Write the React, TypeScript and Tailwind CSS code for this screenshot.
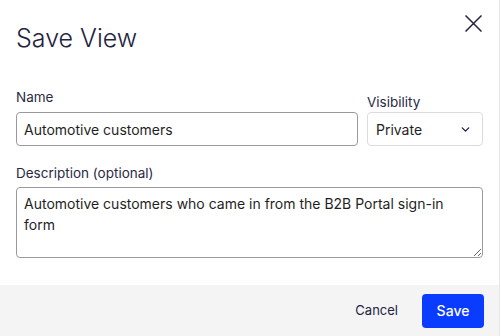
import { ChevronDown } from "lucide-react"

export default function App() {
  return (
    <div className="flex h-[336px] w-[501px] bg-white font-['Inter',sans-serif]">
      <div className="flex w-[500px] flex-col border-r border-gray-200 bg-white">
        <div className="flex items-start justify-between pl-4 pr-[17px] pt-[20px]">
          <h1 className="text-[25px] font-light leading-[36px] text-[#23233f]">Save View</h1>
          <button className="mt-[-5px] text-[#23233f]">
            <svg width="17" height="17" viewBox="0 0 17 17" fill="none" stroke="currentColor" strokeWidth="1.5">
              <path d="M0.5 0.5 L16.5 16.5 M16.5 0.5 L0.5 16.5" />
            </svg>
          </button>
        </div>

        <div className="mt-[32px] flex gap-[9px] px-4">
          <div className="flex flex-1 flex-col">
            <label className="text-[13.5px] leading-[18px] text-[#2a2a45]">Name</label>
            <input
              defaultValue="Automotive customers"
              className="mt-[6px] h-[34px] rounded-[4px] border border-[#9a9a9a] px-[7px] text-[14px] text-[#1f1f1f] outline-none"
            />
          </div>
          <div className="flex w-[116px] flex-col">
            <label className="mt-[5px] text-[13.5px] leading-[18px] text-[#2a2a45]">Visibility</label>
            <div className="mt-[1px] flex h-[34px] items-center justify-between rounded-[4px] border border-[#dcdcdc] pl-[8px] pr-[10px] text-[14px] text-[#1f1f1f]">
              <span>Private</span>
              <ChevronDown size={13} strokeWidth={2.5} className="text-[#23233f]" />
            </div>
          </div>
        </div>

        <div className="mt-[18px] flex flex-col px-4">
          <label className="text-[13.5px] leading-[18px] text-[#2a2a45]">Description (optional)</label>
          <textarea
            defaultValue="Automotive customers who came in from the B2B Portal sign-in form"
            className="mt-[5px] h-[71px] w-full resize-y rounded-[4px] border border-[#9a9a9a] px-[7px] py-[5px] text-[14px] leading-[21px] text-[#1f1f1f] outline-none"
          />
        </div>

        <div className="mt-auto flex h-[51px] items-center justify-end gap-[24px] bg-[#f4f4f4] pr-[15px]">
          <button className="text-[13px] text-[#23233f]">Cancel</button>
          <button className="h-[34px] w-[62px] rounded-[4px] bg-[#0a3cff] text-[14px] font-medium text-white">
            Save
          </button>
        </div>
      </div>
    </div>
  )
}
